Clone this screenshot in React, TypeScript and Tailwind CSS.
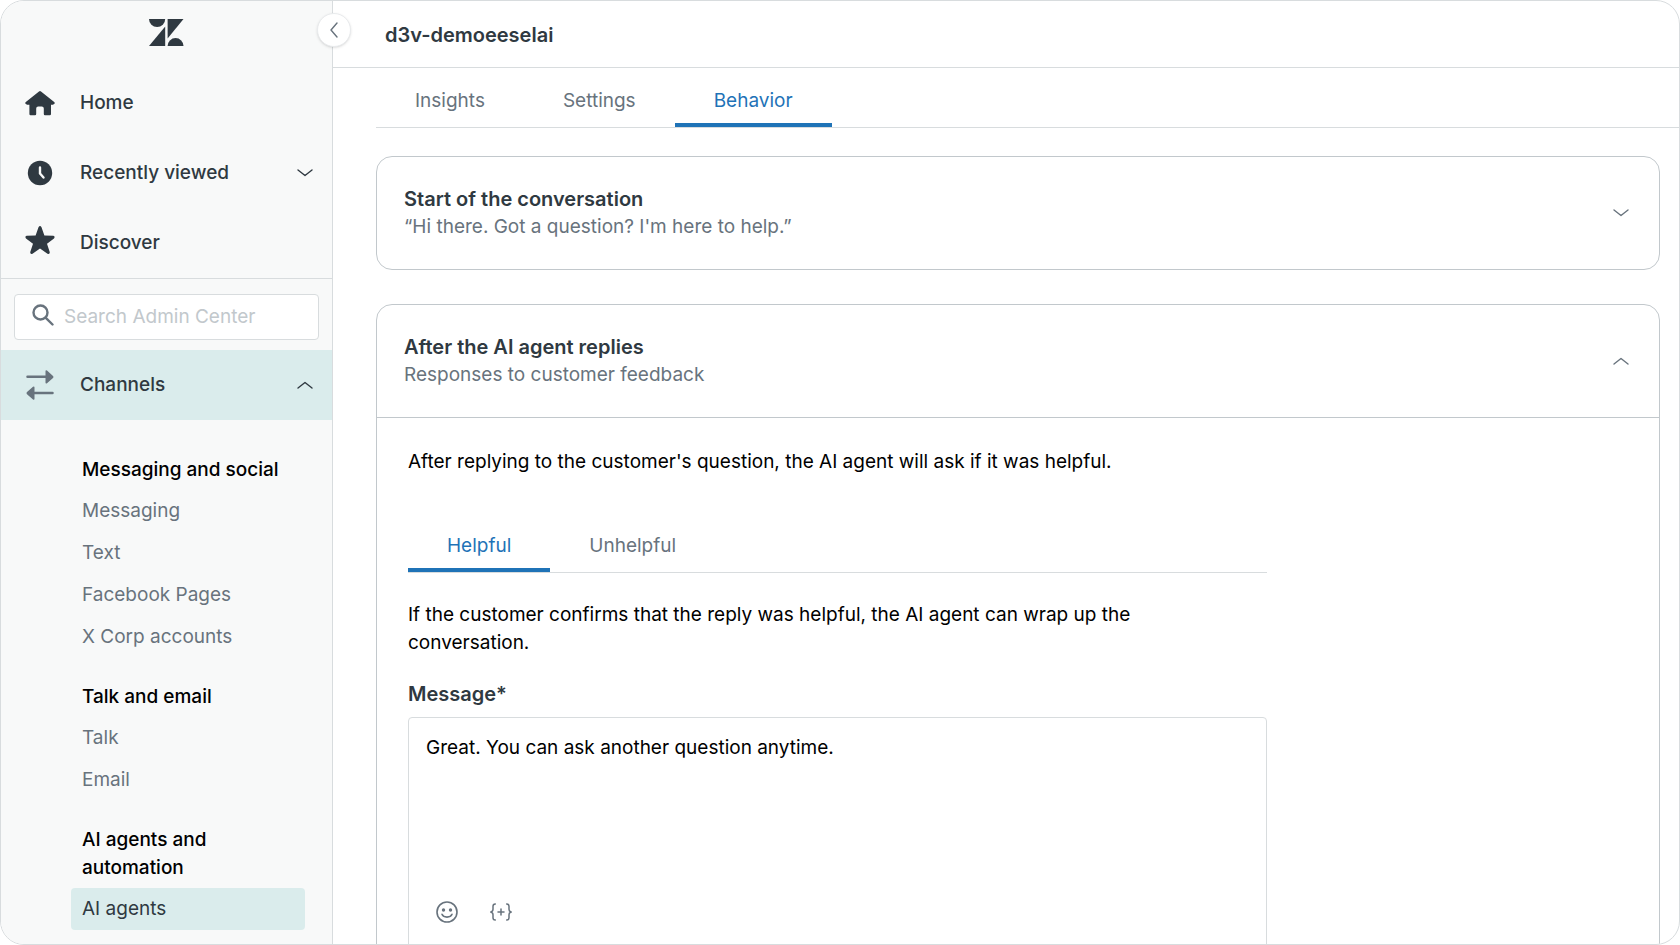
import { useState } from "react";
import type { ReactNode } from "react";

type LinkGroup = {
  title: string;
  links: string[];
};

const groups: LinkGroup[] = [
  {
    title: "Messaging and social",
    links: ["Messaging", "Text", "Facebook Pages", "X Corp accounts"],
  },
  { title: "Talk and email", links: ["Talk", "Email"] },
  { title: "AI agents and automation", links: ["AI agents"] },
];

function Chevron({ direction }: { direction: "up" | "down" | "left" }) {
  const paths = {
    down: "M1 5 L8 10.5 L15 5",
    up: "M1 11 L8 5.5 L15 11",
    left: "M11 1 L5 8 L11 15",
  };
  return (
    <svg
      width="16"
      height="16"
      viewBox="0 0 16 16"
      fill="none"
      stroke="currentColor"
      strokeWidth="1.4"
      strokeLinecap="round"
      strokeLinejoin="round"
      aria-hidden="true"
    >
      <path d={paths[direction]} />
    </svg>
  );
}

function Logo() {
  return (
    <svg width="35" height="27" viewBox="0 0 35 27" fill="#2f3941" aria-hidden="true">
      <path d="M0 0H16.200A8.100 8.100 0 0 1 0 0Z" />
      <path d="M16.200 7.600V27H0Z" />
      <path d="M18.600 0H34.500L18.600 19.400Z" />
      <path d="M18.600 27A7.950 7.950 0 0 1 34.500 27Z" />
    </svg>
  );
}

function HomeIcon() {
  return (
    <svg width="30" height="30" viewBox="0 0 30 30" fill="currentColor" aria-hidden="true">
      <path d="M14 3.400a1.600 1.600 0 0 1 2 0L29.200 14a1.300 1.300 0 0 1-.5 2.300l-.8.5H26V26a1.200 1.200 0 0 1-1.200 1.200H20A1.200 1.200 0 0 1 18.800 26v-5.500a2 2 0 0 0-2-2h-3.600a2 2 0 0 0-2 2V26A1.200 1.200 0 0 1 10 27.200H5.600A1.200 1.200 0 0 1 4.400 26v-9.200H2.100l-.8-.5A1.300 1.300 0 0 1 .8 14Z" />
    </svg>
  );
}

function ClockIcon() {
  return (
    <svg width="30" height="30" viewBox="0 0 30 30" aria-hidden="true">
      <circle cx="15" cy="15" r="12.2" fill="currentColor" />
      <path
        d="M15 9.5V15.5L18.5 19.5"
        fill="none"
        stroke="#f8f9f9"
        strokeWidth="2.4"
        strokeLinecap="round"
        strokeLinejoin="round"
      />
    </svg>
  );
}

function StarIcon() {
  return (
    <svg
      width="30"
      height="30"
      viewBox="0 2 30 30"
      fill="currentColor"
      className="overflow-visible"
      aria-hidden="true"
    >
      <path d="M13.500 1.200Q15-1 16.500 1.200L19.400 9.600L28.400 9.800Q30.500 10.500 29 12.500L22 17.800L24.800 26.300Q24.800 28.600 22.500 27.800L15 22.600L7.500 27.800Q5.200 28.600 5.200 26.300L8 17.800L1 12.500Q-.5 10.500 1.600 9.800L10.600 9.600Z" />
    </svg>
  );
}

function ChannelsIcon() {
  return (
    <svg width="30" height="30" viewBox="0 0 30 30" fill="#68737d" aria-hidden="true">
      <path d="M2.500 5.600H20.500V1.200Q20.500-.3 22 .5L28 5.900Q28.900 7 28 8.100L22 13.200Q20.500 14 20.500 12.500V8.100H2.500A1.250 1.250 0 0 1 2.500 5.600Z" />
      <path d="M27.500 21.800H9.500V17.400Q9.500 15.900 8 16.700L2 22.100Q1.100 23.200 2 24.200L8 29.400Q9.500 30.200 9.500 28.700V24.300H27.500A1.250 1.250 0 0 0 27.500 21.800Z" />
    </svg>
  );
}

function SearchIcon() {
  return (
    <svg
      width="22"
      height="26"
      viewBox="0 0 22 26"
      fill="none"
      stroke="#68737d"
      strokeWidth="2.4"
      strokeLinecap="round"
      aria-hidden="true"
    >
      <circle cx="8.5" cy="8.5" r="7" />
      <path d="M13.8 13.8L20.500 20.500" />
    </svg>
  );
}

function SmileIcon() {
  return (
    <svg width="22" height="22" viewBox="0 0 22 22" fill="none" stroke="currentColor" aria-hidden="true">
      <circle cx="11" cy="11" r="10" strokeWidth="1.6" />
      <path d="M6 13.300C7.500 17 14.500 17 16 13.300" strokeWidth="1.6" strokeLinecap="round" />
      <circle cx="7.500" cy="9" r="1.700" fill="currentColor" stroke="none" />
      <circle cx="14.500" cy="9" r="1.700" fill="currentColor" stroke="none" />
    </svg>
  );
}

function PlaceholderIcon() {
  return (
    <svg
      width="22"
      height="18"
      viewBox="0 0 22 18"
      fill="none"
      stroke="currentColor"
      strokeWidth="1.5"
      strokeLinecap="round"
      strokeLinejoin="round"
      aria-hidden="true"
    >
      <path d="M5.300 1C3.800 1 3 1.800 3 3.300V6.300C3 7.800 2.300 8.700.8 9C2.300 9.300 3 10.200 3 11.700V14.700C3 16.200 3.800 17 5.300 17" />
      <path d="M16.700 1C18.200 1 19 1.800 19 3.300V6.300C19 7.800 19.700 8.700 21.200 9C19.700 9.300 19 10.200 19 11.700V14.700C19 16.200 18.200 17 16.700 17" />
      <path d="M11 6V12M8 9H14" />
    </svg>
  );
}

function NavItem({
  icon,
  label,
  chevron,
  active,
}: {
  icon: ReactNode;
  label: string;
  chevron?: "up" | "down";
  active?: boolean;
}) {
  return (
    <button
      className={`flex h-[70px] w-full shrink-0 items-center pl-6 pr-[19px] text-left font-medium text-[#2f3941] ${
        active ? "bg-[#daecec]" : ""
      }`}
    >
      {icon}
      <span className="ml-[25px] flex-1">{label}</span>
      {chevron && <Chevron direction={chevron} />}
    </button>
  );
}

function Tabs({
  items,
  initial,
  compact,
}: {
  items: string[];
  initial: string;
  compact?: boolean;
}) {
  const [selected, setSelected] = useState(initial);
  return (
    <div role="tablist" className="flex border-b border-[#d8dcde]">
      {items.map((item) => (
        <button
          key={item}
          role="tab"
          aria-selected={item === selected}
          onClick={() => setSelected(item)}
          className={`border-b-4 px-[39px] pb-2 ${compact ? "" : "pt-[19px]"} ${
            item === selected
              ? "border-[#1f73b7] text-[#1f73b7]"
              : "border-transparent text-[#68737d]"
          }`}
        >
          {item}
        </button>
      ))}
    </div>
  );
}

function CardHeader({
  title,
  subtitle,
  open,
}: {
  title: string;
  subtitle: string;
  open?: boolean;
}) {
  return (
    <button
      aria-expanded={!!open}
      className="flex w-full items-center justify-between py-7 pl-[27px] pr-[30px] text-left text-[#68737d]"
    >
      <span className="flex flex-col">
        <span className="text-[20px] font-semibold text-[#2f3941]">{title}</span>
        <span>{subtitle}</span>
      </span>
      <Chevron direction={open ? "up" : "down"} />
    </button>
  );
}

function Sidebar() {
  return (
    <aside className="relative flex w-[332px] shrink-0 flex-col border-r border-[#d8dcde] bg-[#f8f9f9]">
      <div className="flex h-[67px] shrink-0 justify-center pt-[18px]">
        <Logo />
      </div>
      <nav className="border-b border-[#d8dcde]">
        <NavItem icon={<HomeIcon />} label="Home" />
        <NavItem icon={<ClockIcon />} label="Recently viewed" chevron="down" />
        <NavItem icon={<StarIcon />} label="Discover" />
      </nav>
      <label className="mx-[13px] mt-[15px] mb-[10px] flex h-[46px] shrink-0 items-center gap-[10px] rounded border border-[#d8dcde] bg-white px-[17px]">
        <SearchIcon />
        <input
          type="search"
          aria-label="Search Admin Center"
          placeholder="Search Admin Center"
          className="min-w-0 flex-1 outline-none placeholder:text-[#c2c8cc]"
        />
      </label>
      <NavItem icon={<ChannelsIcon />} label="Channels" chevron="up" active />
      <div className="flex flex-col gap-[25px] pt-9 pr-[27px] pl-[70px]">
        {groups.map((group) => (
          <section key={group.title}>
            <h2 className="mb-[6px] px-[11px] font-medium text-black">{group.title}</h2>
            {group.links.map((link) => (
              <a
                key={link}
                href="#"
                className={`flex h-[42px] items-center rounded px-[11px] ${
                  link === "AI agents" ? "bg-[#daecec] text-[#2f3941]" : "text-[#68737d]"
                }`}
              >
                {link}
              </a>
            ))}
          </section>
        ))}
      </div>
      <button
        aria-label="Collapse sidebar"
        className="absolute top-[12px] -right-[19px] z-10 flex size-[34px] items-center justify-center rounded-full border border-[#e9ebed] bg-white text-[#68737d] shadow-sm"
      >
        <Chevron direction="left" />
      </button>
    </aside>
  );
}

export default function App() {
  const [message, setMessage] = useState("Great. You can ask another question anytime.");

  return (
    <div className="h-screen bg-white font-['Inter',sans-serif] text-[19px] leading-[28px] text-black">
      <div className="flex h-full overflow-hidden rounded-3xl border border-[#d8dcde]">
        <Sidebar />
        <main className="min-w-0 flex-1">
          <header className="flex h-[67px] items-center border-b border-[#d8dcde] pt-[2px] pl-[52px]">
            <h1 className="text-[20px] font-semibold text-[#2f3941]">d3v-demoeeselai</h1>
          </header>
          <div className="pl-[43px]">
            <Tabs items={["Insights", "Settings", "Behavior"]} initial="Behavior" />
            <div className="flex flex-col gap-[34px] pt-7 pr-[19px]">
              <section className="rounded-2xl border border-[#c2c8cc]">
                <CardHeader
                  title="Start of the conversation"
                  subtitle="“Hi there. Got a question? I'm here to help.”"
                />
              </section>
              <section className="rounded-2xl border border-[#c2c8cc]">
                <CardHeader
                  title="After the AI agent replies"
                  subtitle="Responses to customer feedback"
                  open
                />
                <div className="border-t border-[#c2c8cc] px-[31px] pt-[30px] pb-8">
                  <p>
                    After replying to the customer's question, the AI agent will ask if it was
                    helpful.
                  </p>
                  <div className="max-w-[859px] pt-14">
                    <Tabs items={["Helpful", "Unhelpful"]} initial="Helpful" compact />
                    <p className="max-w-[760px] pt-7">
                      If the customer confirms that the reply was helpful, the AI agent can wrap
                      up the conversation.
                    </p>
                    <label
                      htmlFor="message"
                      className="block pt-[23px] pb-[9px] text-[20px] font-semibold text-[#2f3941]"
                    >
                      Message*
                    </label>
                    <div className="rounded border border-[#d8dcde]">
                      <textarea
                        id="message"
                        value={message}
                        onChange={(e) => setMessage(e.target.value)}
                        className="block h-[172px] w-full resize-none px-[17px] pt-4 outline-none"
                      />
                      <div className="flex gap-8 px-[27px] pt-[11px] pb-8 text-[#68737d]">
                        <button aria-label="Add emoji">
                          <SmileIcon />
                        </button>
                        <button aria-label="Insert placeholder">
                          <PlaceholderIcon />
                        </button>
                      </div>
                    </div>
                  </div>
                </div>
              </section>
            </div>
          </div>
        </main>
      </div>
    </div>
  );
}
